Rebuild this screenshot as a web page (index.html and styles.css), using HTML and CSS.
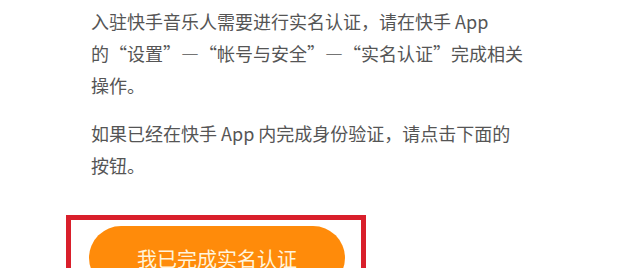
FILE: index.html
```html
<!DOCTYPE html>
<html lang="zh-CN">
<head>
<meta charset="utf-8">
<title>实名认证</title>
<link rel="stylesheet" href="styles.css">
</head>
<body>
<main class="page">
  <div class="content">
    <p class="para">入驻快手音乐人需要进行实名认证，请在快手 App<br>的“设置”—“帐号与安全”—“实名认证”完成相关<br>操作。</p>
    <p class="para">如果已经在快手 App 内完成身份验证，请点击下面的<br>按钮。</p>
  </div>
  <div class="highlight">
    <button class="btn" type="button">我已完成实名认证</button>
  </div>
</main>
</body>
</html>
```

FILE: styles.css
```css
html, body {
  margin: 0;
  padding: 0;
  background: #ffffff;
}
body {
  font-family: "Noto Sans CJK SC", "Noto Sans", sans-serif;
  color: #555555;
  overflow: hidden;
}
.page {
  padding-top: 5px;
}
.content {
  padding-left: 91px;
}
.para {
  margin: 0 0 16px 0;
  font-size: 18px;
  line-height: 32px;
}
.para:last-child {
  margin-bottom: 0;
}
.highlight {
  margin: 34px 0 0 66px;
  width: 300px;
  height: 120px;
  box-sizing: border-box;
  border: 5px solid #d91f2b;
  padding: 6px 16px 0 18px;
}
.btn {
  display: block;
  width: 256px;
  height: 64px;
  border: none;
  border-radius: 32px;
  background: #ff8b0a;
  color: #fff4dc;
  font-family: "Noto Sans CJK SC", "Noto Sans", sans-serif;
  font-size: 20px;
  padding: 0;
  cursor: pointer;
}
```
